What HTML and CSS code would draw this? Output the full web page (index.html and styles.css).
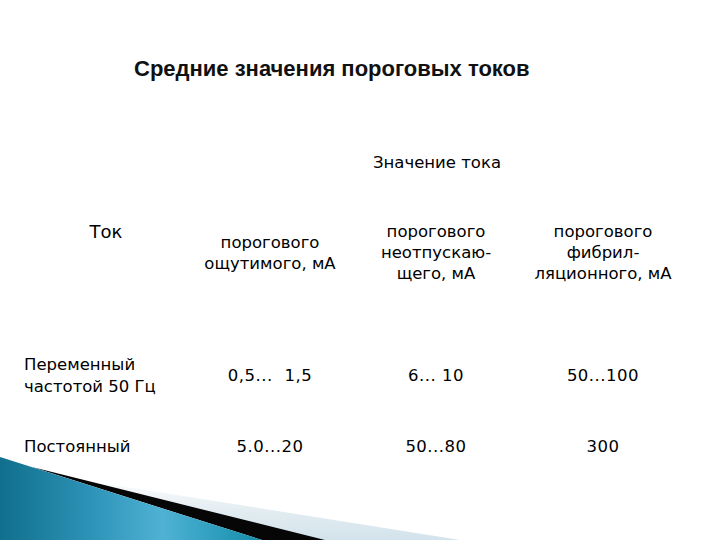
FILE: index.html
```html
<!DOCTYPE html>
<html lang="ru">
<head>
<meta charset="utf-8">
<title>Средние значения пороговых токов</title>
<link rel="stylesheet" href="styles.css">
</head>
<body>
<div class="slide">
  <h1 class="title">Средние значения пороговых токов</h1>
  <div class="table">
    <div class="row row-a">
      <div class="cell span3">Значение тока</div>
    </div>
    <div class="row row-b">
      <div class="cell c1 tok">Ток</div>
      <div class="cell center">порогового<br>ощутимого, мА</div>
      <div class="cell center">порогового<br>неотпускаю-<br>щего, мА</div>
      <div class="cell center">порогового<br>фибрил-<br>ляционного, мА</div>
    </div>
    <div class="row row-c">
      <div class="cell c1">Переменный<br>частотой 50 Гц</div>
      <div class="cell center num wide">0,5... 1,5</div>
      <div class="cell center num">6... 10</div>
      <div class="cell center num">50...100</div>
    </div>
    <div class="row row-d">
      <div class="cell c1">Постоянный</div>
      <div class="cell center num">5.0...20</div>
      <div class="cell center num">50...80</div>
      <div class="cell center num">300</div>
    </div>
  </div>
  <svg class="deco" viewBox="0 0 480 90" width="480" height="90" aria-hidden="true">
    <defs>
      <linearGradient id="blue" x1="0" y1="0" x2="1" y2="0">
        <stop offset="0" stop-color="#106f8c"/>
        <stop offset="0.35" stop-color="#2d93b8"/>
        <stop offset="0.62" stop-color="#4fb2d4"/>
        <stop offset="0.85" stop-color="#2b9cbc"/>
        <stop offset="1" stop-color="#168ca6"/>
      </linearGradient>
      <linearGradient id="pale" x1="0" y1="0" x2="0" y2="1">
        <stop offset="0" stop-color="#ffffff"/>
        <stop offset="0.5" stop-color="#e3edf2"/>
        <stop offset="1" stop-color="#d3e3eb"/>
      </linearGradient>
    </defs>
    <polygon points="70,28 460,90 262,90" fill="url(#pale)"/>
    <polygon points="32,17 325,90 262,90" fill="#060606"/>
    <polygon points="0,7 262,90 0,90" fill="url(#blue)"/>
  </svg>
</div>
</body>
</html>
```
FILE: styles.css
```css
html, body {
  margin: 0;
  padding: 0;
  background: #ffffff;
}

.slide {
  position: relative;
  width: 720px;
  height: 540px;
  overflow: hidden;
  background: #ffffff;
  color: #000000;
}

.title {
  margin: 0;
  padding: 56px 0 0 134px;
  font-family: "Liberation Sans", Arial, sans-serif;
  font-weight: bold;
  font-size: 22px;
  line-height: 26px;
  color: #111111;
}

.table {
  display: flex;
  flex-direction: column;
  margin-left: 14px;
  font-family: "DejaVu Sans", Verdana, sans-serif;
  font-size: 16.5px;
  line-height: 21px;
}

.row {
  display: grid;
  grid-template-columns: 184px 144px 188px 146px;
  align-items: center;
}

.row-a { margin-top: 70px; }
.row-b { margin-top: 48px; }
.row-c { margin-top: 70px; line-height: 22px; }
.row-d { margin-top: 38px; line-height: 22px; }

.span3 {
  grid-column: 2 / 5;
  text-align: center;
}

.c1 {
  padding-left: 10px;
}

.tok {
  align-self: start;
  padding-left: 0;
  text-align: center;
  font-size: 18px;
}

.center {
  text-align: center;
}

.num {
  letter-spacing: 0.5px;
}

.wide {
  word-spacing: 6px;
}

.deco {
  position: absolute;
  left: 0;
  bottom: 0;
  display: block;
}
```
